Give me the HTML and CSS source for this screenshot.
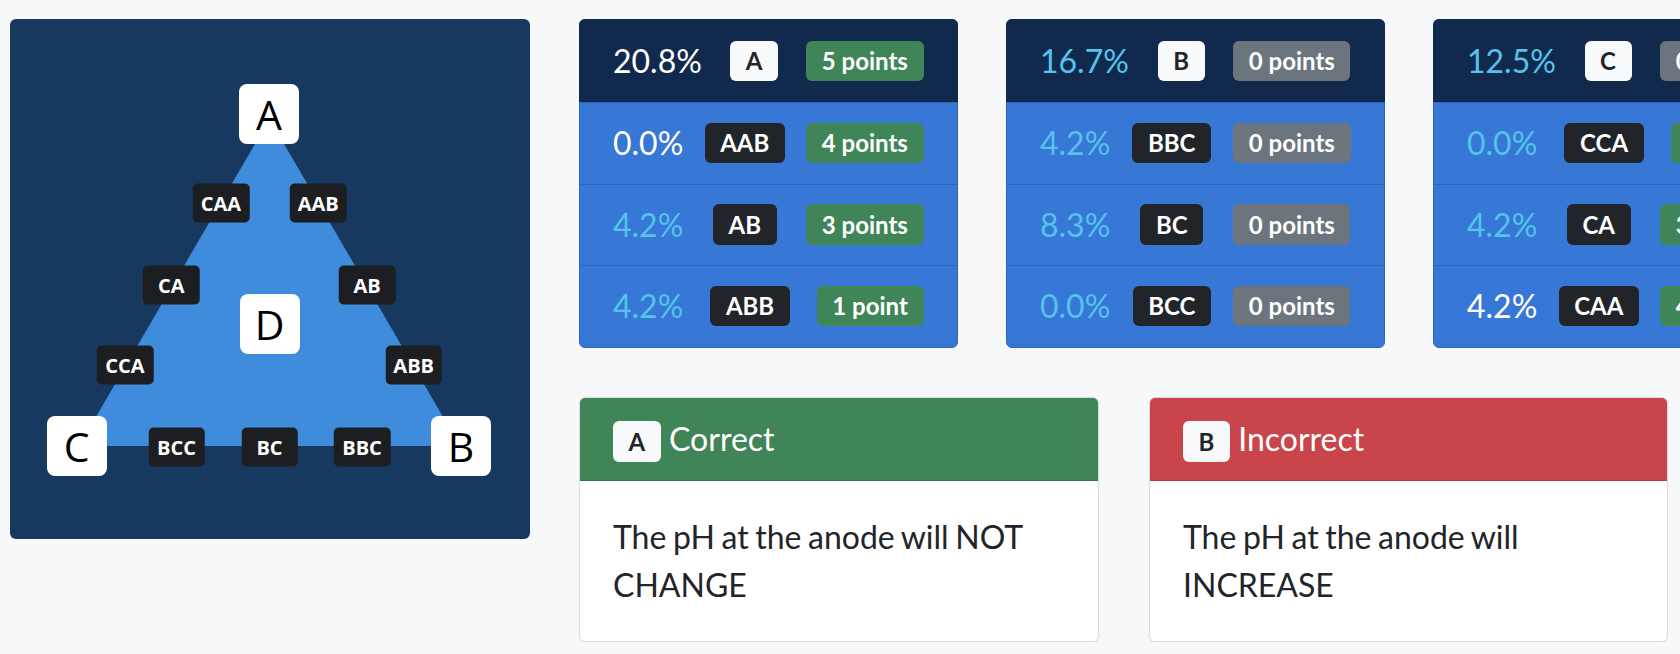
FILE: index.html
```html
<!DOCTYPE html>
<html lang="en">
<head>
<meta charset="utf-8">
<title>Triangle results</title>
<link rel="stylesheet" href="styles.css">
</head>
<body>
<div class="page">
  <div class="diagram">
    <svg class="tri" viewBox="0 0 520 520" width="520" height="520" aria-hidden="true">
      <polygon points="259.5,100 69,427 450,427" fill="#3e8cdb"/>
    </svg>
    <div class="node big n-a">A</div>
    <div class="node big n-d">D</div>
    <div class="node big n-c">C</div>
    <div class="node big n-b">B</div>
    <div class="node lbl n-caa">CAA</div>
    <div class="node lbl n-aab">AAB</div>
    <div class="node lbl n-ca">CA</div>
    <div class="node lbl n-ab">AB</div>
    <div class="node lbl n-cca">CCA</div>
    <div class="node lbl n-abb">ABB</div>
    <div class="node lbl n-bcc">BCC</div>
    <div class="node lbl n-bc">BC</div>
    <div class="node lbl n-bbc">BBC</div>
  </div>

  <div class="main">
    <div class="stats">
      <div class="stat-card">
        <div class="stat-row head"><span class="pct hi">20.8%</span><span class="badge light">A</span><span class="badge success">5 points</span></div>
        <div class="stat-row"><span class="pct hi">0.0%</span><span class="badge dark">AAB</span><span class="badge success">4 points</span></div>
        <div class="stat-row"><span class="pct">4.2%</span><span class="badge dark">AB</span><span class="badge success">3 points</span></div>
        <div class="stat-row"><span class="pct">4.2%</span><span class="badge dark">ABB</span><span class="badge success">1 point</span></div>
      </div>
      <div class="stat-card">
        <div class="stat-row head"><span class="pct">16.7%</span><span class="badge light">B</span><span class="badge secondary">0 points</span></div>
        <div class="stat-row"><span class="pct">4.2%</span><span class="badge dark">BBC</span><span class="badge secondary">0 points</span></div>
        <div class="stat-row"><span class="pct">8.3%</span><span class="badge dark">BC</span><span class="badge secondary">0 points</span></div>
        <div class="stat-row"><span class="pct">0.0%</span><span class="badge dark">BCC</span><span class="badge secondary">0 points</span></div>
      </div>
      <div class="stat-card">
        <div class="stat-row head"><span class="pct">12.5%</span><span class="badge light">C</span><span class="badge secondary">0 points</span></div>
        <div class="stat-row"><span class="pct">0.0%</span><span class="badge dark">CCA</span><span class="badge success">1 point</span></div>
        <div class="stat-row"><span class="pct">4.2%</span><span class="badge dark">CA</span><span class="badge success">3 points</span></div>
        <div class="stat-row"><span class="pct hi">4.2%</span><span class="badge dark">CAA</span><span class="badge success">4 points</span></div>
      </div>
    </div>

    <div class="answers">
      <div class="answer correct">
        <div class="answer-head"><span class="badge light">A</span> Correct</div>
        <div class="answer-body">The pH at the anode will NOT CHANGE</div>
      </div>
      <div class="answer incorrect">
        <div class="answer-head"><span class="badge light">B</span> Incorrect</div>
        <div class="answer-body">The pH at the anode will INCREASE</div>
      </div>
    </div>
  </div>
</div>
</body>
</html>
```

FILE: styles.css
```css
html, body {
  margin: 0;
  padding: 0;
  overflow: hidden;
  background: #f7f8fa;
}

body {
  font-family: "Lato", "Liberation Sans", sans-serif;
  color: #212529;
}

.page {
  display: flex;
  align-items: flex-start;
  gap: 49px;
  padding: 19px 0 0 10px;
}

/* ---------- diagram ---------- */
.diagram {
  position: relative;
  flex: 0 0 520px;
  width: 520px;
  height: 520px;
  background: #17385f;
  border-radius: 6px;
}

.tri {
  position: absolute;
  left: 0;
  top: 0;
}

.node {
  position: absolute;
  display: flex;
  align-items: center;
  justify-content: center;
  transform: translate(-50%, -50%);
  font-family: "Open Sans", "Noto Sans", sans-serif;
}

.node.big {
  width: 60px;
  height: 60px;
  background: #ffffff;
  color: #000000;
  border-radius: 8px;
  font-size: 41px;
  font-weight: 400;
}

.node.lbl {
  width: 56.5px;
  height: 39px;
  background: #1c1e22;
  color: #ffffff;
  border-radius: 5px;
  font-size: 20px;
  font-weight: 700;
}

.n-a { left: 259px; top: 95px; }
.n-d { left: 259.5px; top: 305px; }
.n-c { left: 66.6px; top: 427px; }
.n-b { left: 451px; top: 427px; }
.n-caa { left: 211px; top: 183.5px; }
.n-aab { left: 308.3px; top: 183.5px; }
.n-ca { left: 161.3px; top: 265.5px; }
.n-ab { left: 357px; top: 265.5px; }
.n-cca { left: 115px; top: 345.5px; }
.n-abb { left: 403.7px; top: 345.5px; }
.n-bcc { left: 166.5px; top: 427.5px; }
.n-bc { left: 259.5px; top: 427.5px; }
.n-bbc { left: 352px; top: 427.5px; }

/* ---------- main column ---------- */
.main {
  flex: 0 0 1089px;
  width: 1089px;
  display: flex;
  flex-direction: column;
  gap: 49px;
}

.stats {
  display: grid;
  grid-template-columns: repeat(3, 378.5px);
  column-gap: 48.5px;
}

.stat-card {
  background: #3777d6;
  border: 1px solid #2f66b5;
  border-radius: 6px;
}

.stat-row {
  display: flex;
  align-items: center;
  justify-content: space-between;
  padding: 16px 33px 16.5px;
  border-top: 1px solid #2f66b5;
  font-size: 32px;
  line-height: 48px;
}

.stat-row.head {
  margin: -1px -1px 0;
  padding: 18px 34px 17px;
  border-top: 0;
  background: #10294c;
  border-radius: 6px 6px 0 0;
}

.pct {
  color: #55c3ec;
  font-weight: 400;
}

.pct.hi {
  color: #ffffff;
}

/* ---------- badges ---------- */
.badge {
  display: inline-block;
  padding: 8.4px 15.6px;
  font-family: "Lato", "Liberation Sans", sans-serif;
  font-size: 24px;
  font-weight: 700;
  line-height: 1;
  border-radius: 6px;
  white-space: nowrap;
  vertical-align: baseline;
  word-spacing: normal;
}

.badge.light { background: #f8f9fa; color: #212529; }
.badge.dark { background: #212529; color: #ffffff; }
.badge.success { background: #408558; color: #ffffff; }
.badge.secondary { background: #6c757d; color: #ffffff; }

/* ---------- answers ---------- */
.answers {
  display: grid;
  grid-template-columns: 520px 519px;
  column-gap: 50px;
}

.answer {
  background: #ffffff;
  border: 1px solid #dadcdf;
  border-radius: 6px;
  box-shadow: 0 1px 1px rgba(0, 0, 0, 0.06);
  overflow: hidden;
}

.answer-head {
  padding: 17px 33px 17px;
  font-size: 32px;
  line-height: 48px;
  color: #ffffff;
  border-bottom: 1px solid rgba(0, 0, 0, 0.12);
}

.answer.correct .answer-head { background: #408558; }
.answer.incorrect .answer-head { background: #ca444b; }

.answer-body {
  padding: 32px 33px;
  font-size: 32px;
  line-height: 48px;
  word-spacing: -1.6px;
  color: #212529;
}
```
